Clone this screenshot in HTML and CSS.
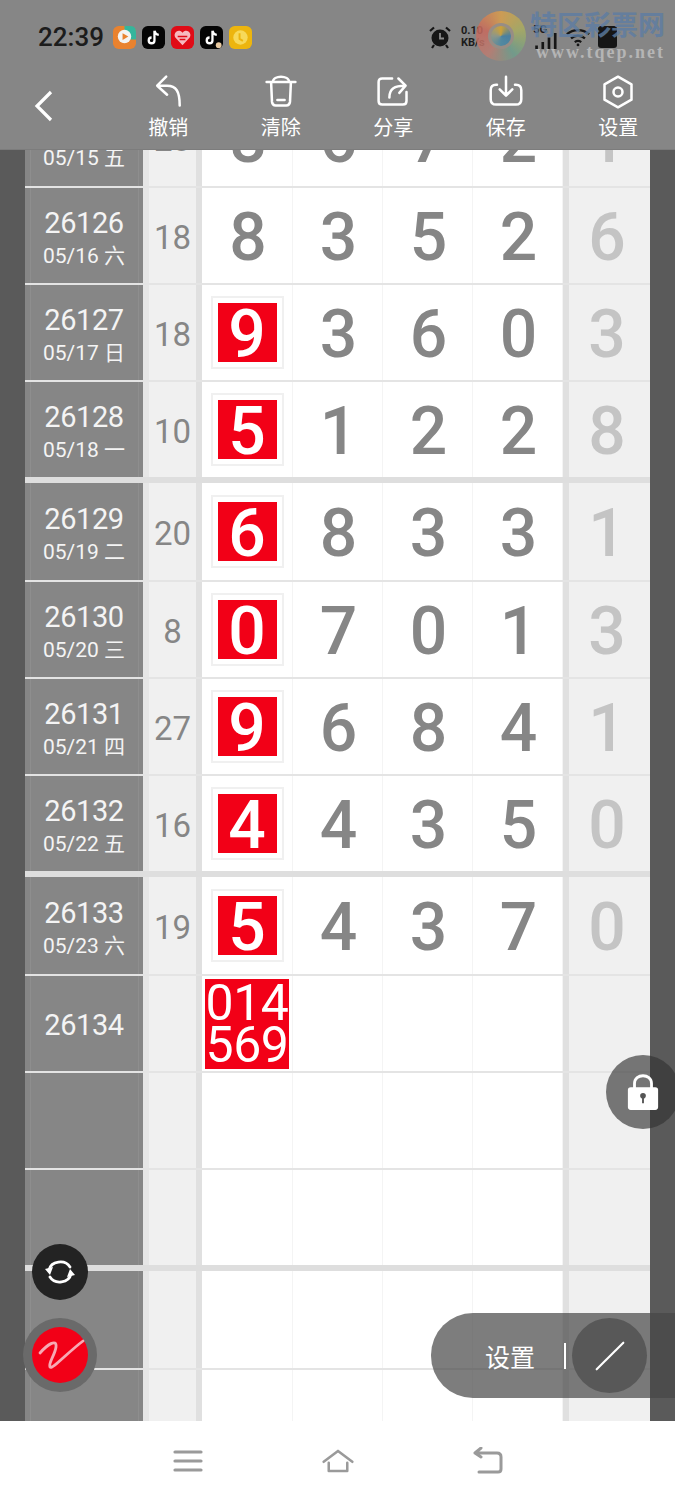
FILE: index.html
```html
<!DOCTYPE html>
<html lang="zh-CN">
<head>
    <meta charset="UTF-8">
    <meta name="viewport" content="width=device-width, initial-scale=1.0">
    <title>排列五</title>
    <link rel="stylesheet" href="styles.css">
</head>
<body>
    <div class="page">
        <div class="header">
            <div class="status-bar">
                <span class="time">22:39</span>
                <div class="app-icons">
                    <svg class="app-icon" viewBox="0 0 24 24"><rect width="24" height="24" rx="6" fill="#e9822f"/><path d="M12 0H18Q24 0 24 6V14H12Z" fill="#35b59c"/><circle cx="12" cy="11" r="7" fill="#f3f3f3"/><path d="M10 7.500 16 11 10 14.500Z" fill="#e9822f"/></svg>
                    <svg class="app-icon" viewBox="0 0 24 24"><rect width="24" height="24" rx="6" fill="#050505"/><path d="M13 5v10a3 3 0 1 1-3-3M13 5c.5 2.500 2 4 4.500 4.300" fill="none" stroke="#fff" stroke-width="2.400"/></svg>
                    <svg class="app-icon" viewBox="0 0 24 24"><rect width="24" height="24" rx="6" fill="#e00b16"/><path d="M12 20 4.500 12a4.500 4.500 0 0 1 7.500-5 4.500 4.500 0 0 1 7.500 5Z" fill="#f7b9bf"/><path d="M7 11h10M9 14h6" stroke="#e00b16" stroke-width="1.500"/></svg>
                    <svg class="app-icon" viewBox="0 0 24 24"><rect width="24" height="24" rx="6" fill="#050505"/><path d="M13 5v10a3 3 0 1 1-3-3M13 5c.5 2.500 2 4 4.500 4.300" fill="none" stroke="#fff" stroke-width="2.400"/><circle cx="19.500" cy="20" r="3" fill="#e8c9a0"/></svg>
                    <svg class="app-icon" viewBox="0 0 24 24"><rect width="24" height="24" rx="6" fill="#edb50e"/><circle cx="12" cy="12" r="7.500" fill="#f7d95a"/><path d="M11 7.500v6l3.500 2" fill="none" stroke="#edb50e" stroke-width="2"/></svg>
                </div>
                <div class="status-right">
                    <svg class="alarm" viewBox="0 0 24 24"><circle cx="12" cy="13" r="8.500" fill="#161616"/><path d="M12 8v5.500h4" fill="none" stroke="#888" stroke-width="1.800"/><path d="M2 6 6 2.500M22 6 18 2.500M6 20l-2 3M18 20l2 3" stroke="#161616" stroke-width="2.200"/></svg>
                    <span class="speed">0.10<br>KB/s</span>
                    <div class="signal">
                        <span class="net">5G</span>
                        <svg class="bars" viewBox="0 0 26 18"><path d="M2 18v-4h3v4ZM9 18V10h3v8ZM16 18V5h3v13ZM23 18V0h3v18Z" fill="#161616"/></svg>
                    </div>
                    <svg class="wifi" viewBox="0 0 28 20"><path d="M2 7c7-6 17-6 24 0M6.500 11.500c4.500-4 10.500-4 15 0M10.500 15.500c2-1.500 5-1.500 7 0" fill="none" stroke="#161616" stroke-width="2.400"/><circle cx="14" cy="18.500" r="1.500" fill="#161616"/></svg>
                    <span class="battery"></span>
                </div>
            </div>
            <div class="toolbar">
                <div class="back">
                    <svg class="back-icon" viewBox="0 0 24 36"><path d="M19 4 5 18 19 32" fill="none" stroke="#fff" stroke-width="3.200"/></svg>
                </div>
                <div class="tool">
                    <svg class="tool-icon" viewBox="0 0 40 40"><path d="M18 3 8 13 19 23M8 13H19C29 13 33 19 33 35" fill="none" stroke="#fff" stroke-width="2.800" stroke-linecap="round" stroke-linejoin="round"/></svg>
                    <span>撤销</span>
                </div>
                <div class="tool">
                    <svg class="tool-icon" viewBox="0 0 40 40"><path d="M4 9H36M11 9C11 1 29 1 29 9M9 9 10 31Q10.500 35 14 35H26Q29.500 35 30 31L31 9M16 29H24" fill="none" stroke="#fff" stroke-width="2.800" stroke-linecap="round" stroke-linejoin="round"/></svg>
                    <span>清除</span>
                </div>
                <div class="tool">
                    <svg class="tool-icon" viewBox="0 0 40 40"><path d="M19 5H8Q4 5 4 9V30Q4 34 8 34H31Q35 34 35 30V20M16 26C16 16 22 13 33 13M26 5 34 13 27 21" fill="none" stroke="#fff" stroke-width="2.800" stroke-linecap="round" stroke-linejoin="round"/></svg>
                    <span>分享</span>
                </div>
                <div class="tool">
                    <svg class="tool-icon" viewBox="0 0 40 40"><path d="M10 12H9Q3 12 3 18V28Q3 34 9 34H31Q37 34 37 28V18Q37 12 31 12H30M20 3V23M13 17 20 24 27 17" fill="none" stroke="#fff" stroke-width="2.800" stroke-linecap="round" stroke-linejoin="round"/></svg>
                    <span>保存</span>
                </div>
                <div class="tool">
                    <svg class="tool-icon" viewBox="0 0 40 40"><path d="M20 3 35 11.500V28.500L20 37 5 28.500V11.500Z" fill="none" stroke="#fff" stroke-width="2.800" stroke-linejoin="round"/><circle cx="20" cy="20" r="5" fill="none" stroke="#fff" stroke-width="2.800"/></svg>
                    <span>设置</span>
                </div>
            </div>
        </div>

        <div class="board">
            <div class="row first clipped">
                <div class="label"><b>26125</b><small>05/15 五</small></div>
                <div class="sum">23</div>
                <div class="num">8</div><div class="num">6</div><div class="num">7</div><div class="num">2</div>
                <div class="last">1</div>
            </div>
            <div class="row">
                <div class="label"><b>26126</b><small>05/16 六</small></div>
                <div class="sum">18</div>
                <div class="num">8</div><div class="num">3</div><div class="num">5</div><div class="num">2</div>
                <div class="last">6</div>
            </div>
            <div class="row">
                <div class="label"><b>26127</b><small>05/17 日</small></div>
                <div class="sum">18</div>
                <div class="num"><span class="hit">9</span></div><div class="num">3</div><div class="num">6</div><div class="num">0</div>
                <div class="last">3</div>
            </div>
            <div class="row end">
                <div class="label"><b>26128</b><small>05/18 一</small></div>
                <div class="sum">10</div>
                <div class="num"><span class="hit">5</span></div><div class="num">1</div><div class="num">2</div><div class="num">2</div>
                <div class="last">8</div>
            </div>
            <div class="row first">
                <div class="label"><b>26129</b><small>05/19 二</small></div>
                <div class="sum">20</div>
                <div class="num"><span class="hit">6</span></div><div class="num">8</div><div class="num">3</div><div class="num">3</div>
                <div class="last">1</div>
            </div>
            <div class="row">
                <div class="label"><b>26130</b><small>05/20 三</small></div>
                <div class="sum">8</div>
                <div class="num"><span class="hit">0</span></div><div class="num">7</div><div class="num">0</div><div class="num">1</div>
                <div class="last">3</div>
            </div>
            <div class="row">
                <div class="label"><b>26131</b><small>05/21 四</small></div>
                <div class="sum">27</div>
                <div class="num"><span class="hit">9</span></div><div class="num">6</div><div class="num">8</div><div class="num">4</div>
                <div class="last">1</div>
            </div>
            <div class="row end">
                <div class="label"><b>26132</b><small>05/22 五</small></div>
                <div class="sum">16</div>
                <div class="num"><span class="hit">4</span></div><div class="num">4</div><div class="num">3</div><div class="num">5</div>
                <div class="last">0</div>
            </div>
            <div class="row first">
                <div class="label"><b>26133</b><small>05/23 六</small></div>
                <div class="sum">19</div>
                <div class="num"><span class="hit">5</span></div><div class="num">4</div><div class="num">3</div><div class="num">7</div>
                <div class="last">0</div>
            </div>
            <div class="row">
                <div class="label"><b>26134</b></div>
                <div class="sum"></div>
                <div class="num"><span class="pick">014<br>569</span></div><div class="num"></div><div class="num"></div><div class="num"></div>
                <div class="last"></div>
            </div>
            <div class="row">
                <div class="label"></div><div class="sum"></div>
                <div class="num"></div><div class="num"></div><div class="num"></div><div class="num"></div>
                <div class="last"></div>
            </div>
            <div class="row end">
                <div class="label"></div><div class="sum"></div>
                <div class="num"></div><div class="num"></div><div class="num"></div><div class="num"></div>
                <div class="last"></div>
            </div>
            <div class="row first">
                <div class="label"></div><div class="sum"></div>
                <div class="num"></div><div class="num"></div><div class="num"></div><div class="num"></div>
                <div class="last"></div>
            </div>
            <div class="row">
                <div class="label"></div><div class="sum"></div>
                <div class="num"></div><div class="num"></div><div class="num"></div><div class="num"></div>
                <div class="last"></div>
            </div>
        </div>

        <div class="nav-bar">
            <svg class="nav-icon" viewBox="0 0 32 28"><path d="M3 5H29M3 14H29M3 23H29" fill="none" stroke="#9a9a9a" stroke-width="3.200" stroke-linecap="round"/></svg>
            <svg class="nav-icon" viewBox="0 0 38 30"><path d="M2 16 19 3 36 16M8 17V27H30V17" fill="none" stroke="#9a9a9a" stroke-width="3" stroke-linecap="round" stroke-linejoin="round"/></svg>
            <svg class="nav-icon" viewBox="0 0 32 28"><path d="M3 6H25Q29 6 29 10V22Q29 25 26 25H7M9 1 3 6 9 10" fill="none" stroke="#9a9a9a" stroke-width="3" stroke-linecap="round" stroke-linejoin="round"/></svg>
        </div>

        <div class="watermark">
            <span class="wm-logo"><span class="wm-core"></span></span>
            <div class="wm-text">
                <span class="wm-name">特区彩票网</span>
                <span class="wm-url">www.tqep.net</span>
            </div>
        </div>

        <div class="float-btn refresh">
            <svg viewBox="0 0 32 32"><path d="M5 14C7 5 21 3 26 11M27 18C25 27 11 29 6 21" fill="none" stroke="#fff" stroke-width="2.800" stroke-linecap="round"/><path d="M1 13 9 11 6 19ZM31 19 23 21 26 13Z" fill="#fff"/></svg>
        </div>
        <div class="float-btn pen">
            <span class="pen-dot">
                <svg viewBox="0 0 56 56"><path d="M8 26C15 18 25 11 24 20 23 28 16 36 18 40 20 43 35 26 51 14" fill="none" stroke="#f7a9b4" stroke-width="2.800" stroke-linecap="round" stroke-linejoin="round"/></svg>
            </span>
        </div>
        <div class="float-btn lock">
            <svg viewBox="0 0 36 42"><path d="M9 18V12C9 1 27 1 27 12V18" fill="none" stroke="#fff" stroke-width="3"/><rect x="2" y="16" width="32" height="24" rx="3" fill="#fff"/><circle cx="18" cy="25" r="3" fill="#555"/><path d="M18 25V33" stroke="#555" stroke-width="2"/></svg>
        </div>
        <div class="pill">
            <span class="pill-text">设置</span>
            <span class="pill-sep"></span>
            <span class="pill-tool">
                <svg viewBox="0 0 36 36"><path d="M3 33 33 3" stroke="#fff" stroke-width="2.400" stroke-linecap="round"/></svg>
            </span>
        </div>
    </div>
</body>
</html>
```

FILE: styles.css
```css
* {
    box-sizing: border-box;
}
body {
    margin: 0;
    background: #fff;
    font-family: Inter, "Noto Sans CJK SC", sans-serif;
}
.page {
    position: relative;
    display: flex;
    flex-direction: column;
    width: 675px;
    height: 1500px;
    overflow: hidden;
}

/* top bars */
.header {
    height: 150px;
    flex: none;
    background: #868686;
    border-bottom: 1px solid #7c7c7c;
}
.status-bar {
    display: flex;
    align-items: center;
    height: 74px;
    padding: 0 58px 0 38px;
}
.time {
    width: 75px;
    color: #1c1c1c;
    font-family: Roboto, sans-serif;
    font-size: 26px;
    font-weight: 500;
}
.app-icons {
    display: flex;
    gap: 6px;
}
.app-icon {
    width: 23px;
    height: 23px;
}
.status-right {
    display: flex;
    align-items: center;
    margin-left: auto;
}
.alarm {
    width: 24px;
    height: 24px;
    margin-right: 9px;
}
.speed {
    width: 32px;
    color: #1c1c1c;
    font-family: Roboto, sans-serif;
    font-size: 11px;
    font-weight: 700;
    line-height: 12px;
}
.signal {
    position: relative;
    width: 26px;
    height: 24px;
    margin-left: 40px;
}
.net {
    position: absolute;
    top: -2px;
    left: 0;
    color: #1c1c1c;
    font-size: 10px;
    font-weight: 700;
}
.bars {
    position: absolute;
    bottom: 0;
    left: 0;
    width: 24px;
    height: 16px;
}
.wifi {
    width: 26px;
    height: 20px;
    margin-left: 6px;
}
.battery {
    width: 19px;
    height: 22px;
    margin-left: 7px;
    background: #161616;
    border-radius: 3px;
}
.toolbar {
    display: flex;
}
.back {
    width: 112px;
    padding: 14px 0 0 32px;
}
.back-icon {
    width: 24px;
    height: 36px;
}
.tool {
    display: flex;
    flex-direction: column;
    align-items: center;
    width: 112.5px;
    color: #fff;
    font-size: 20px;
    line-height: 26px;
}
.tool-icon {
    width: 36px;
    height: 36px;
    margin-bottom: 5px;
}

/* lottery table */
.board {
    flex: 1;
    overflow: hidden;
    padding: 0 25px;
    background: #5a5a5a;
}
.row {
    display: grid;
    grid-template-columns: 118px 59px 91px 90px 90px 90px 87px;
    height: 97px;
    border-bottom: 2px solid #e4e4e4;
}
.row.first {
    height: 99px;
}
.row.end {
    height: 101px;
    border-bottom-width: 6px;
    border-bottom-color: #dedede;
}
.row.clipped {
    margin-top: -61px;
}
.label {
    display: flex;
    flex-direction: column;
    align-items: center;
    justify-content: center;
    padding-top: 4px;
    background: #868686;
    color: #f4f4f4;
    box-shadow: inset 5px 0 0 #868686, inset 6px 0 0 #8e8e8e, inset -4px 0 0 #868686, inset -5px 0 0 #8e8e8e;
}
.label b {
    font-family: Roboto, sans-serif;
    font-size: 29px;
    font-weight: 400;
    letter-spacing: -0.4px;
    line-height: 35px;
}
.label small {
    margin-top: 1px;
    font-family: Roboto, "Noto Sans CJK SC", sans-serif;
    font-size: 21px;
    line-height: 28px;
}
.sum {
    display: flex;
    align-items: center;
    justify-content: center;
    padding-top: 4px;
    background: #f0f0f0;
    border-left: 6px solid #e6e6e6;
    border-right: 6px solid #e0e0e0;
    color: #868686;
    font-family: Roboto, sans-serif;
    font-size: 33px;
}
.num {
    display: flex;
    align-items: center;
    justify-content: center;
    padding: 4px 0 0 2px;
    background: #fff;
    border-right: 1px solid #f4f4f4;
    color: #868686;
    font-family: Roboto, sans-serif;
    font-size: 66px;
    font-weight: 500;
}
.last {
    display: flex;
    align-items: center;
    justify-content: center;
    padding: 4px 5px 0 0;
    background: #f0f0f0;
    border-left: 6px solid #e0e0e0;
    color: #c4c4c4;
    font-family: Roboto, sans-serif;
    font-size: 66px;
    font-weight: 500;
}
.hit {
    display: flex;
    align-items: center;
    justify-content: center;
    width: 59px;
    height: 59px;
    margin: -4px 0 0 -2px;
    padding-top: 4px;
    background: #f20017;
    color: #fff;
    outline: 5px solid #fff;
    box-shadow: 0 0 0 7px #f0f0f0;
}
.pick {
    display: block;
    width: 84px;
    height: 90px;
    margin: -4px 0 0 -2px;
    padding-top: 3px;
    background: #f20017;
    color: #fff;
    font-size: 50px;
    font-weight: 400;
    letter-spacing: -0.5px;
    line-height: 42px;
    text-align: center;
}

/* phone navigation */
.nav-bar {
    display: flex;
    align-items: center;
    justify-content: center;
    gap: 118px;
    height: 79px;
    flex: none;
    background: #fff;
}
.nav-icon {
    width: 32px;
    height: 28px;
}

/* floating bits */
.watermark {
    position: absolute;
    top: 10px;
    left: 476px;
    display: flex;
    align-items: center;
    gap: 4px;
}
.wm-logo {
    display: flex;
    align-items: center;
    justify-content: center;
    width: 50px;
    height: 50px;
    border-radius: 50%;
    background: conic-gradient(#d9a04c, #a9ad62, #6f9e8c, #bb7d72, #c9695d, #d9a04c);
    opacity: 0.85;
}
.wm-core {
    width: 26px;
    height: 26px;
    border-radius: 50%;
    background: conic-gradient(#d9a62c, #3f7fa4, #4a8aa5, #8f9a8a, #d9a62c);
    border: 3px solid #9b8f85;
}
.wm-text {
    display: flex;
    flex-direction: column;
    align-items: flex-end;
}
.wm-name {
    color: #5d7da3;
    font-size: 27px;
    font-weight: 700;
    line-height: 32px;
    opacity: 0.8;
}
.wm-url {
    color: #b5b5b5;
    font-family: "Liberation Serif", serif;
    font-size: 18px;
    font-weight: 700;
    letter-spacing: 2px;
    line-height: 20px;
}
.float-btn {
    position: absolute;
    display: flex;
    align-items: center;
    justify-content: center;
    border-radius: 50%;
}
.refresh {
    top: 1244px;
    left: 32px;
    width: 56px;
    height: 56px;
    background: #232323;
}
.refresh svg {
    width: 32px;
    height: 32px;
}
.pen {
    top: 1318px;
    left: 23px;
    width: 74px;
    height: 74px;
    background: #6a6a6a;
}
.pen-dot {
    width: 56px;
    height: 56px;
    border-radius: 50%;
    background: #f20017;
}
.pen-dot svg {
    display: block;
}
.lock {
    top: 1055px;
    left: 606px;
    width: 74px;
    height: 74px;
    background: rgba(50, 50, 50, 0.65);
}
.lock svg {
    width: 34px;
    height: 40px;
}
.pill {
    position: absolute;
    top: 1313px;
    left: 431px;
    display: flex;
    align-items: center;
    width: 260px;
    height: 85px;
    padding-left: 54px;
    border-radius: 42px 0 0 42px;
    background: rgba(70, 70, 70, 0.7);
}
.pill-text {
    color: #fff;
    font-size: 25px;
}
.pill-sep {
    width: 2px;
    height: 26px;
    margin-left: 29px;
    background: #fff;
}
.pill-tool {
    display: flex;
    align-items: center;
    justify-content: center;
    width: 75px;
    height: 75px;
    margin-left: 6px;
    border-radius: 50%;
    background: #585858;
}
.pill-tool svg {
    width: 32px;
    height: 32px;
}
```
